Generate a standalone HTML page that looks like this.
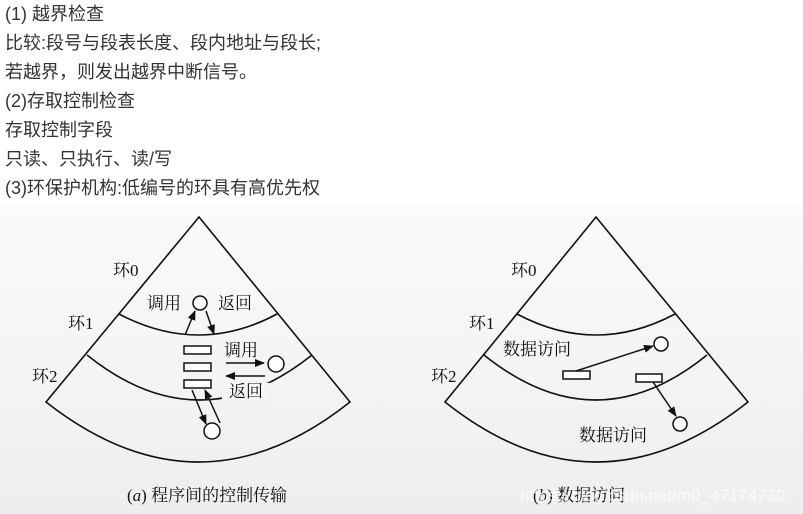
<!DOCTYPE html>
<html><head><meta charset="utf-8"><style>
html,body{margin:0;padding:0;width:803px;height:514px;overflow:hidden;background:#fff}
.t{position:absolute;left:5px;font-family:"Liberation Sans","Noto Sans CJK SC",sans-serif;font-size:18px;color:#333;line-height:20px;white-space:nowrap}
.img{position:absolute;left:0;top:205px;width:803px;height:309px;background:linear-gradient(#fbfbfb,#eeeeee)}
svg text{font-family:"Liberation Serif","Noto Serif CJK SC",serif;fill:#111}
</style></head><body>
<div class="t" style="top:4px">(1) 越界检查</div>
<div class="t" style="top:33px">比较:段号与段表长度、段内地址与段长;</div>
<div class="t" style="top:62px">若越界，则发出越界中断信号。</div>
<div class="t" style="top:91px">(2)存取控制检查</div>
<div class="t" style="top:120px">存取控制字段</div>
<div class="t" style="top:149px">只读、只执行、读/写</div>
<div class="t" style="top:178px">(3)环保护机构:低编号的环具有高优先权</div>
<div class="img"></div>
<svg width="803" height="514" style="position:absolute;left:0;top:0">
<defs><marker id="ar" markerWidth="10" markerHeight="8" refX="9" refY="4" orient="auto" markerUnits="userSpaceOnUse"><path d="M0,0 L10,4 L0,8 z" fill="#111"/></marker></defs>
<g fill="none" stroke="#111" stroke-width="1.6">
<path d="M199,217 L46,402 Q199,522 350,402 Z"/>
<path d="M119,314 Q199,356 277,314"/>
<path d="M87,355 Q199,445 312,355"/>
<path d="M596,217 L445,402 Q596,522 748,402 Z"/>
<path d="M517,314 Q596,356 675,314"/>
<path d="M484,355 Q596,445 707,355"/>
</g>
<rect x="222" y="383" width="48" height="18" fill="#f6f6f6"/>
<g fill="#fff" stroke="#111" stroke-width="1.5">
<circle cx="200" cy="303" r="7"/>
<circle cx="276" cy="364" r="8"/>
<circle cx="212" cy="431" r="8"/>
<rect x="184" y="346" width="27" height="8"/>
<rect x="184" y="363" width="27" height="8"/>
<rect x="184" y="380" width="27" height="8"/>
<circle cx="661" cy="344" r="7"/>
<circle cx="680" cy="424" r="7"/>
<rect x="563" y="371" width="27" height="8"/>
<rect x="636" y="374" width="26" height="8"/>
</g>
<g stroke="#111" stroke-width="1.5" marker-end="url(#ar)">
<line x1="185" y1="335" x2="195" y2="311"/>
<line x1="206" y1="311" x2="214" y2="334"/>
<line x1="226" y1="363" x2="264" y2="363"/>
<line x1="265" y1="376" x2="226" y2="376"/>
<line x1="192" y1="390" x2="206" y2="424"/>
<line x1="220" y1="423" x2="205" y2="390"/>
<line x1="576" y1="371" x2="653" y2="346"/>
<line x1="653" y1="382" x2="676" y2="416"/>
</g>
<g font-size="17">
<text x="113" y="276">环0</text><text x="68" y="329">环1</text><text x="32" y="382">环2</text>
<text x="147" y="309">调用</text><text x="218" y="309">返回</text>
<text x="224" y="356">调用</text><text x="229" y="397">返回</text>
<text x="511" y="276">环0</text><text x="469" y="329">环1</text><text x="431" y="382">环2</text>
<text x="503" y="355">数据访问</text><text x="579" y="441">数据访问</text>
<text x="127" y="501">(<tspan font-style="italic">a</tspan>) 程序间的控制传输</text>
<text x="533" y="501">(<tspan font-style="italic">b</tspan>) 数据访问</text>
</g>
<text x="520" y="501" font-size="17" style="font-family:'Liberation Sans',sans-serif;fill:#fff;opacity:0.75">https://blog.csdn.net/m0_47174730</text>
</svg>
</body></html>
